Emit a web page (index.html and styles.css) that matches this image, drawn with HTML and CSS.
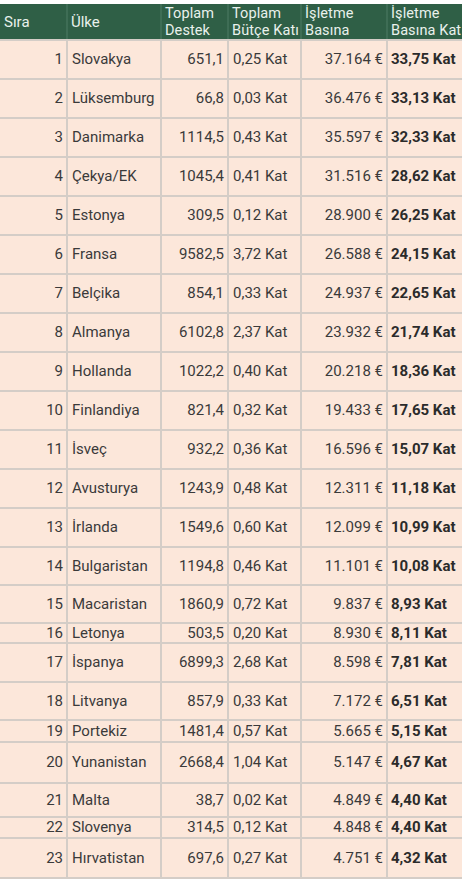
FILE: index.html
```html
<!DOCTYPE html>
<html lang="tr">
<head>
<meta charset="utf-8">
<title>Tablo</title>
<link rel="stylesheet" href="styles.css">
</head>
<body>
<div class="sheet">
  <div class="row head">
    <div class="c">Sıra</div>
    <div class="c">Ülke</div>
    <div class="c"><span class="stack"><span>Toplam</span><span>Destek</span></span></div>
    <div class="c"><span class="stack"><span>Toplam</span><span>Bütçe Katı</span></span></div>
    <div class="c"><span class="stack"><span>İşletme</span><span>Basına</span></span></div>
    <div class="c"><span class="stack"><span>İşletme</span><span>Basına Kat</span></span></div>
  </div>
  <div class="row h37"><div class="c r">1</div><div class="c">Slovakya</div><div class="c r">651,1</div><div class="c">0,25 Kat</div><div class="c r">37.164 €</div><div class="c b">33,75 Kat</div></div>
  <div class="row h37"><div class="c r">2</div><div class="c">Lüksemburg</div><div class="c r">66,8</div><div class="c">0,03 Kat</div><div class="c r">36.476 €</div><div class="c b">33,13 Kat</div></div>
  <div class="row h37"><div class="c r">3</div><div class="c">Danimarka</div><div class="c r">1114,5</div><div class="c">0,43 Kat</div><div class="c r">35.597 €</div><div class="c b">32,33 Kat</div></div>
  <div class="row h37"><div class="c r">4</div><div class="c">Çekya/EK</div><div class="c r">1045,4</div><div class="c">0,41 Kat</div><div class="c r">31.516 €</div><div class="c b">28,62 Kat</div></div>
  <div class="row h37"><div class="c r">5</div><div class="c">Estonya</div><div class="c r">309,5</div><div class="c">0,12 Kat</div><div class="c r">28.900 €</div><div class="c b">26,25 Kat</div></div>
  <div class="row h37"><div class="c r">6</div><div class="c">Fransa</div><div class="c r">9582,5</div><div class="c">3,72 Kat</div><div class="c r">26.588 €</div><div class="c b">24,15 Kat</div></div>
  <div class="row h37"><div class="c r">7</div><div class="c">Belçika</div><div class="c r">854,1</div><div class="c">0,33 Kat</div><div class="c r">24.937 €</div><div class="c b">22,65 Kat</div></div>
  <div class="row h37"><div class="c r">8</div><div class="c">Almanya</div><div class="c r">6102,8</div><div class="c">2,37 Kat</div><div class="c r">23.932 €</div><div class="c b">21,74 Kat</div></div>
  <div class="row h37"><div class="c r">9</div><div class="c">Hollanda</div><div class="c r">1022,2</div><div class="c">0,40 Kat</div><div class="c r">20.218 €</div><div class="c b">18,36 Kat</div></div>
  <div class="row h37"><div class="c r">10</div><div class="c">Finlandiya</div><div class="c r">821,4</div><div class="c">0,32 Kat</div><div class="c r">19.433 €</div><div class="c b">17,65 Kat</div></div>
  <div class="row h37"><div class="c r">11</div><div class="c">İsveç</div><div class="c r">932,2</div><div class="c">0,36 Kat</div><div class="c r">16.596 €</div><div class="c b">15,07 Kat</div></div>
  <div class="row h37"><div class="c r">12</div><div class="c">Avusturya</div><div class="c r">1243,9</div><div class="c">0,48 Kat</div><div class="c r">12.311 €</div><div class="c b">11,18 Kat</div></div>
  <div class="row h37"><div class="c r">13</div><div class="c">İrlanda</div><div class="c r">1549,6</div><div class="c">0,60 Kat</div><div class="c r">12.099 €</div><div class="c b">10,99 Kat</div></div>
  <div class="row h36"><div class="c r">14</div><div class="c">Bulgaristan</div><div class="c r">1194,8</div><div class="c">0,46 Kat</div><div class="c r">11.101 €</div><div class="c b">10,08 Kat</div></div>
  <div class="row h36"><div class="c r">15</div><div class="c">Macaristan</div><div class="c r">1860,9</div><div class="c">0,72 Kat</div><div class="c r">9.837 €</div><div class="c b">8,93 Kat</div></div>
  <div class="row h18"><div class="c r">16</div><div class="c">Letonya</div><div class="c r">503,5</div><div class="c">0,20 Kat</div><div class="c r">8.930 €</div><div class="c b">8,11 Kat</div></div>
  <div class="row h37"><div class="c r">17</div><div class="c">İspanya</div><div class="c r">6899,3</div><div class="c">2,68 Kat</div><div class="c r">8.598 €</div><div class="c b">7,81 Kat</div></div>
  <div class="row h36"><div class="c r">18</div><div class="c">Litvanya</div><div class="c r">857,9</div><div class="c">0,33 Kat</div><div class="c r">7.172 €</div><div class="c b">6,51 Kat</div></div>
  <div class="row h20"><div class="c r">19</div><div class="c">Portekiz</div><div class="c r">1481,4</div><div class="c">0,57 Kat</div><div class="c r">5.665 €</div><div class="c b">5,15 Kat</div></div>
  <div class="row h39"><div class="c r">20</div><div class="c">Yunanistan</div><div class="c r">2668,4</div><div class="c">1,04 Kat</div><div class="c r">5.147 €</div><div class="c b">4,67 Kat</div></div>
  <div class="row h32"><div class="c r">21</div><div class="c">Malta</div><div class="c r">38,7</div><div class="c">0,02 Kat</div><div class="c r">4.849 €</div><div class="c b">4,40 Kat</div></div>
  <div class="row h19"><div class="c r">22</div><div class="c">Slovenya</div><div class="c r">314,5</div><div class="c">0,12 Kat</div><div class="c r">4.848 €</div><div class="c b">4,40 Kat</div></div>
  <div class="row h38"><div class="c r">23</div><div class="c">Hırvatistan</div><div class="c r">697,6</div><div class="c">0,27 Kat</div><div class="c r">4.751 €</div><div class="c b">4,32 Kat</div></div>
  <div class="row h37"><div class="c r"></div><div class="c"></div><div class="c r"></div><div class="c"></div><div class="c r"></div><div class="c b"></div></div>
</div>
</body>
</html>
```
FILE: styles.css
```css
html, body {
  margin: 0;
  padding: 0;
  background: #ffffff;
}
body {
  font-family: Roboto, "Noto Sans", sans-serif;
  font-size: 15px;
  color: #3a3a3a;
  overflow: hidden;
}
.sheet {
  margin-top: 4px;
  display: flex;
  flex-direction: column;
  gap: 2px;
  background: #d4cdc7;
  width: 462px;
}
.row {
  display: grid;
  grid-template-columns: 66px 92px 65px 71px 84px 74px;
  column-gap: 2px;
  background: #d4cdc7;
}
.c {
  background: #fce7da;
  padding: 0 3px 0 4px;
  display: flex;
  align-items: center;
  white-space: nowrap;
  overflow: hidden;
  line-height: 17px;
}
.c.r {
  justify-content: flex-end;
  padding: 0 3px 0 2px;
}
.c.b {
  font-weight: 700;
  color: #2b2b2b;
  padding-left: 3px;
}
.head {
  height: 35px;
  background: #3e6d55;
}
.head .c {
  background: #2f5f46;
  color: #e9f1ec;
  padding-left: 3px;
  padding-top: 1px;
}
.head .c:first-child {
  padding-left: 4px;
}
.stack {
  display: flex;
  flex-direction: column;
  font-size: 14.5px;
  letter-spacing: 0.1px;
}
.stack span {
  display: block;
  height: 17px;
  line-height: 17px;
}
.h37 { height: 37px; }
.h36 { height: 36px; }
.h39 { height: 39px; }
.h38 { height: 38px; }
.h32 { height: 32px; }
.h20 { height: 20px; }
.h19 { height: 19px; }
.h18 { height: 18px; }
```
